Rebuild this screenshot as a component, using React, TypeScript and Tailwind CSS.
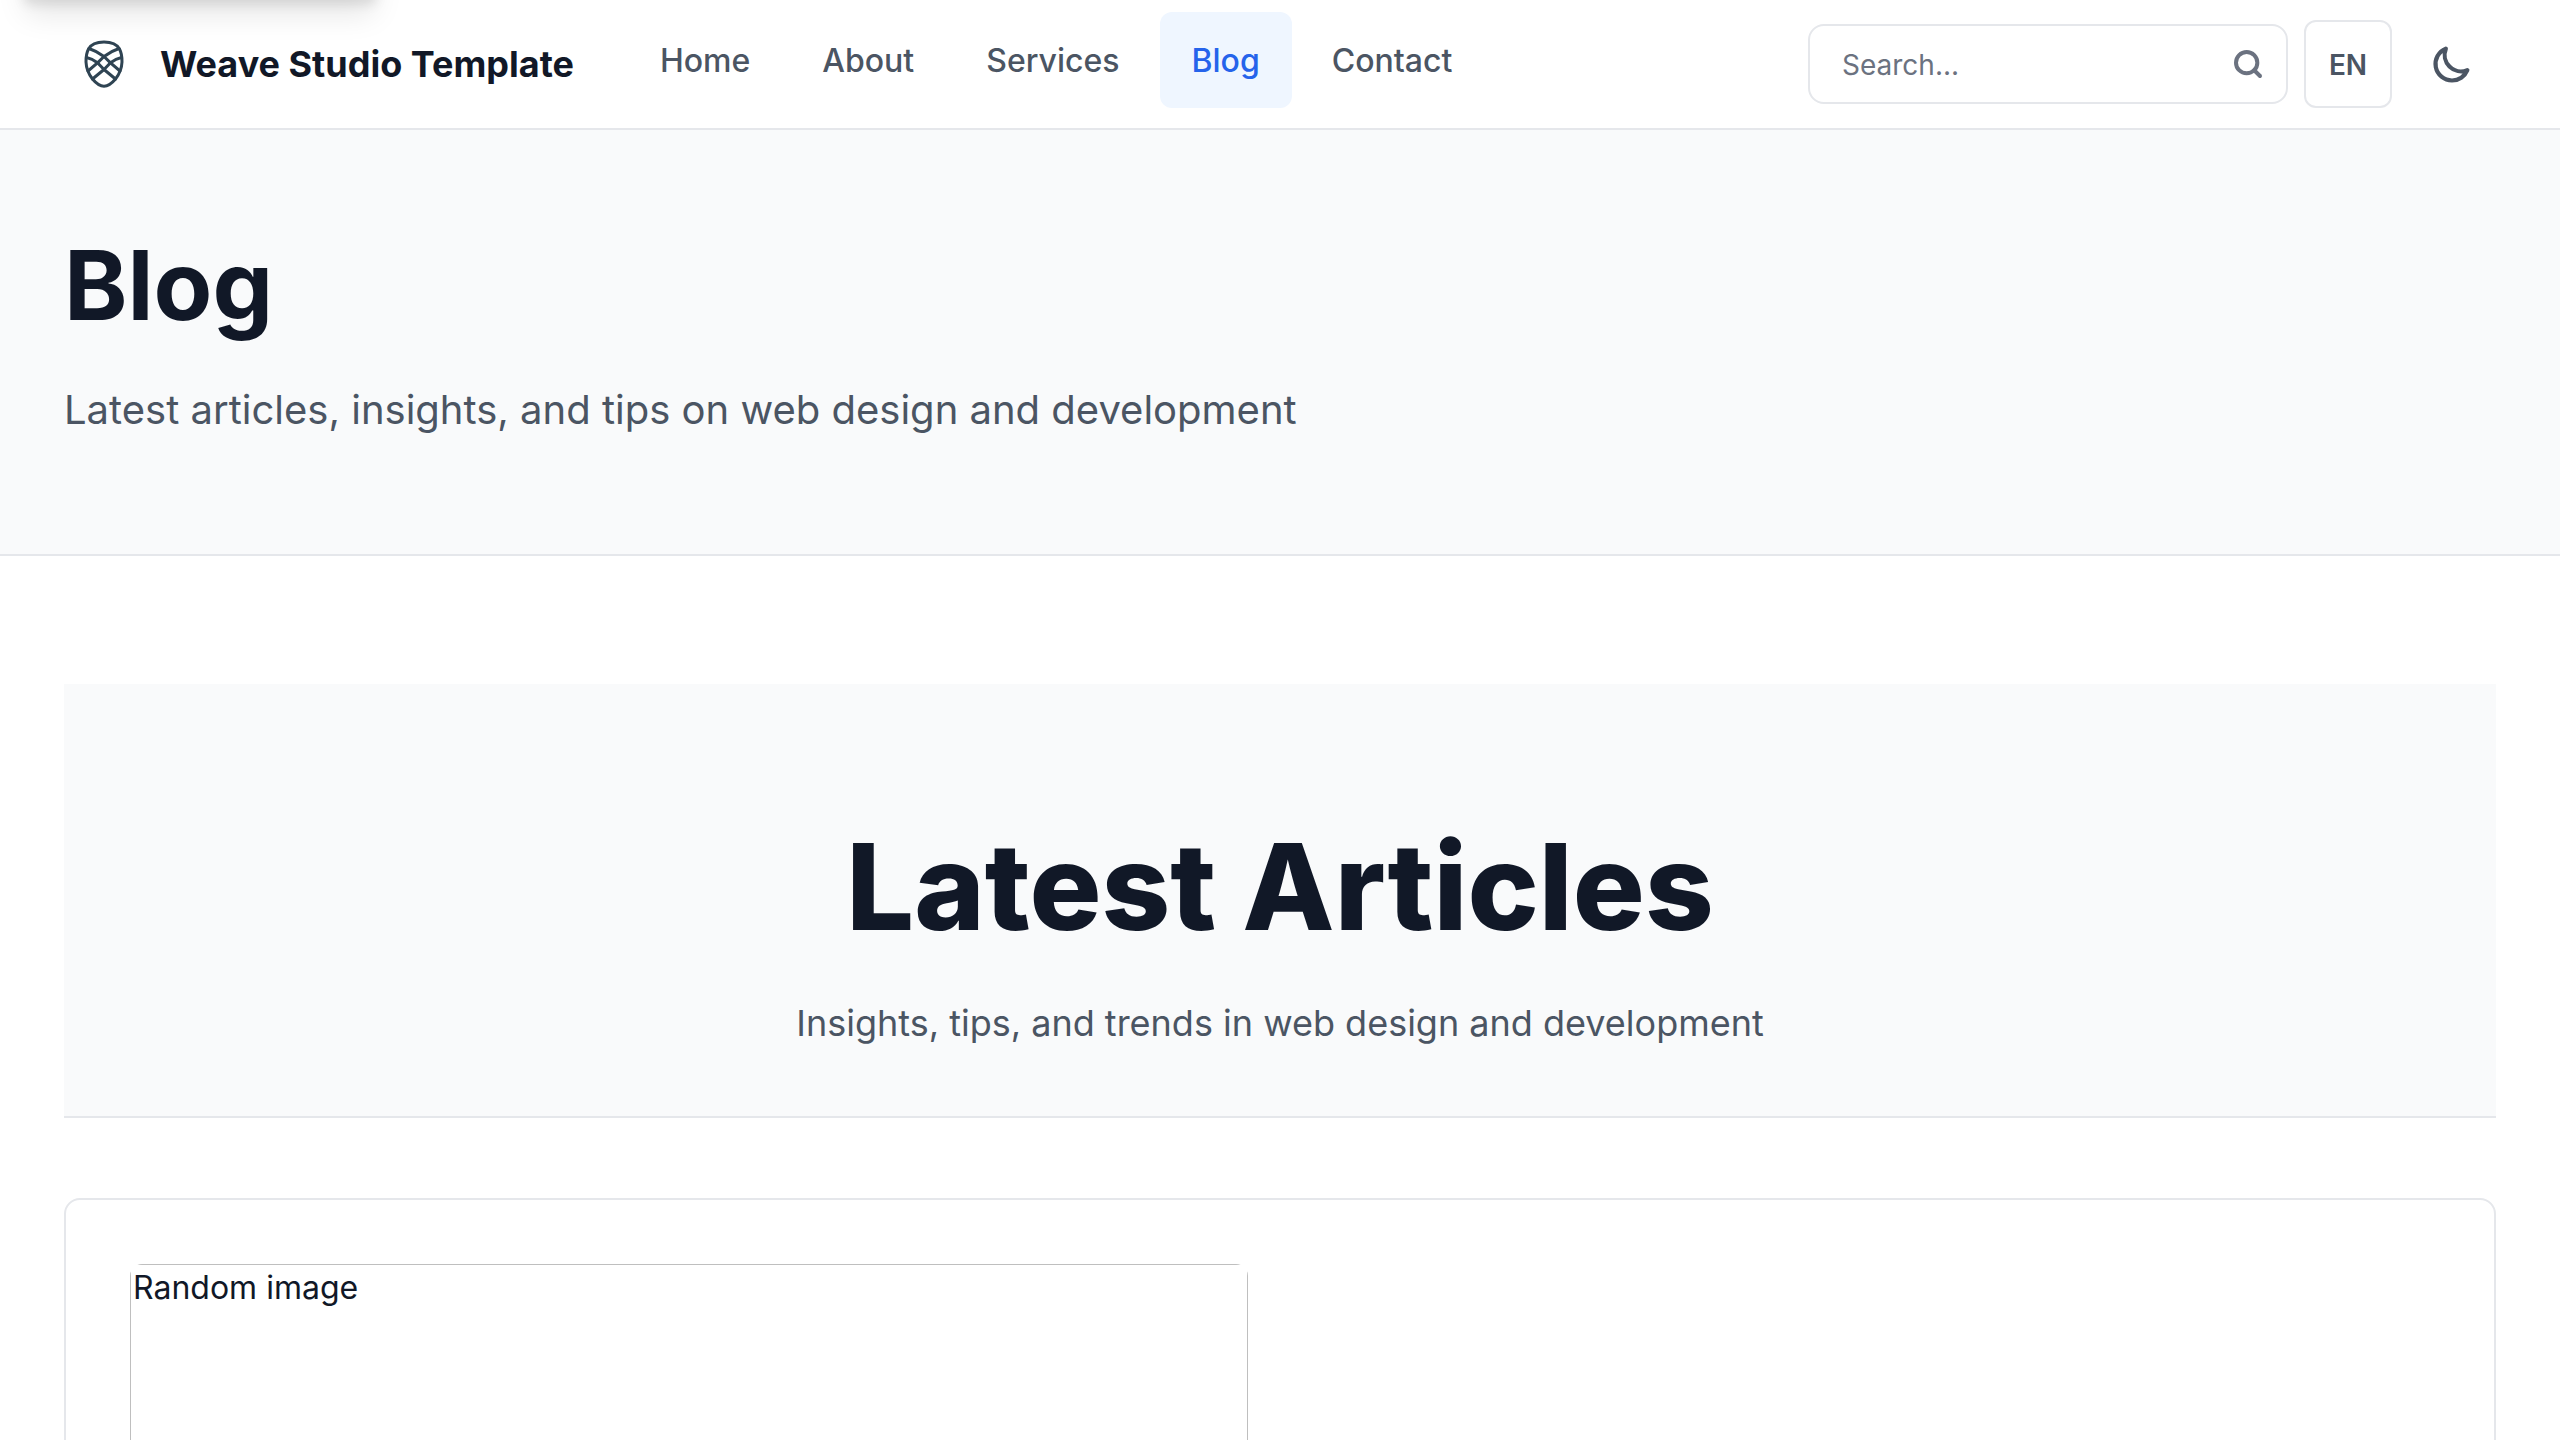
import React from "react";
import { Search } from "lucide-react";

const links = [
  { label: "Home" },
  { label: "About" },
  { label: "Services" },
  { label: "Blog", active: true },
  { label: "Contact" },
];

function Logo() {
  return (
    <svg
      viewBox="0 0 40 48"
      className="h-12 w-10"
      fill="none"
      stroke="#2f4453"
      strokeWidth="3"
      strokeLinecap="round"
      strokeLinejoin="round"
      aria-hidden="true"
    >
      <path d="M20 2C12 2 7 4.500 4.500 9C2.400 13 1.900 17 2 22C2.300 29 4.500 34 8.500 39C12 43.200 16 46.200 20 46.200S28 43.200 31.500 39C35.500 34 37.700 29 38 22C38.100 17 37.600 13 35.500 9C33 4.500 28 2 20 2Z" />
      <path d="M5 8.500C11 10.500 16 13.500 20 16.500L26.500 22.800L36 31M35 8.500C29 10.500 24 13.500 20 16.500L13.500 22.800L4 31" />
      <path d="M2.500 17.500C7 18.500 10.500 20.500 13.500 22.800L20 29.500L31.500 39M37.500 17.500C33 18.500 29.500 20.500 26.500 22.800L20 29.500L8.500 39" />
    </svg>
  );
}

function MoonIcon() {
  return (
    <svg
      viewBox="0 0 24 24"
      className="size-11"
      fill="none"
      stroke="currentColor"
      strokeWidth="2.300"
      strokeLinecap="round"
      strokeLinejoin="round"
      aria-hidden="true"
    >
      <path d="M20.354 15.354A9 9 0 018.646 3.646 9.003 9.003 0 0012 21a9.003 9.003 0 008.354-5.646z" />
    </svg>
  );
}

function Header() {
  return (
    <header className="relative flex h-[130px] items-center border-b-2 border-[#e5e7eb] bg-white px-16">
      <a
        href="#main"
        className="absolute bottom-full left-5 h-20 w-[360px] rounded-lg bg-[#2563eb] shadow-[0_20px_30px_-6px_rgba(0,0,0,0.1),0_8px_12px_-4px_rgba(0,0,0,0.1)]"
        aria-label="Skip to content"
      />
      <a href="#" className="mr-12 flex items-center gap-9 pl-5">
        <Logo />
        <span className="whitespace-nowrap text-4xl font-bold">Weave Studio Template</span>
      </a>
      <nav className="ml-1.5 flex gap-2 self-start pt-3">
        {links.map((l) => (
          <a
            key={l.label}
            href="#"
            aria-current={l.active ? "page" : undefined}
            className={
              l.active
                ? "flex h-24 items-center rounded-xl bg-[#eff6ff] px-8 pt-0.5 text-[32px] font-medium text-[#2563eb]"
                : "flex h-24 items-center rounded-xl px-8 pt-0.5 text-[32px] font-medium text-[#4b5563]"
            }
          >
            {l.label}
          </a>
        ))}
      </nav>
      <div className="ml-auto flex items-center gap-4">
        <label className="flex h-20 w-[480px] items-center rounded-2xl border-2 border-[#e5e7eb] bg-white pl-8 pr-[22px]">
          <input
            type="text"
            aria-label="Search"
            placeholder="Search..."
            className="w-full min-w-0 flex-1 bg-transparent pt-0.5 text-[28px] outline-none placeholder:text-[#6b7280]"
          />
          <Search className="size-8 text-[#6b7280]" strokeWidth={3} />
        </label>
        <button className="size-[88px] rounded-xl border-2 border-[#e5e7eb] pt-0.5 text-[28px] font-semibold text-[#4b5563]">
          EN
        </button>
        <button aria-label="Toggle dark mode" className="flex size-[88px] items-center justify-center text-[#4b5563]">
          <MoonIcon />
        </button>
      </div>
    </header>
  );
}

export default function App() {
  return (
    <div className="h-screen overflow-hidden bg-white font-['Inter',sans-serif] text-[#111827]">
      <Header />
      <section className="border-b-2 border-[#e5e7eb] bg-[#f9fafb] px-16 pb-28 pt-24">
        <h1 className="text-[96px] font-bold leading-[118px]">Blog</h1>
        <p className="mt-[34px] text-[40px] leading-[64px] text-[#4b5563]">
          Latest articles, insights, and tips on web design and development
        </p>
      </section>
      <main id="main" className="px-16 pt-32">
        <section className="border-b-2 border-[#e5e7eb] bg-[#f9fafb] pb-16 pt-32 text-center">
          <h2 className="text-[120px] font-extrabold leading-[150px]">Latest Articles</h2>
          <p className="mt-8 text-[36px] leading-[58px] text-[#4b5563]">
            Insights, tips, and trends in web design and development
          </p>
        </section>
        <article className="mt-20 grid grid-cols-2 gap-16 rounded-2xl border-2 border-[#e5e7eb] bg-white p-16">
          <div className="overflow-hidden rounded-xl">
            <div className="h-[640px] border border-[#bfbfbf] px-0.5 text-[32px] leading-[46px]">Random image</div>
          </div>
        </article>
      </main>
    </div>
  );
}
